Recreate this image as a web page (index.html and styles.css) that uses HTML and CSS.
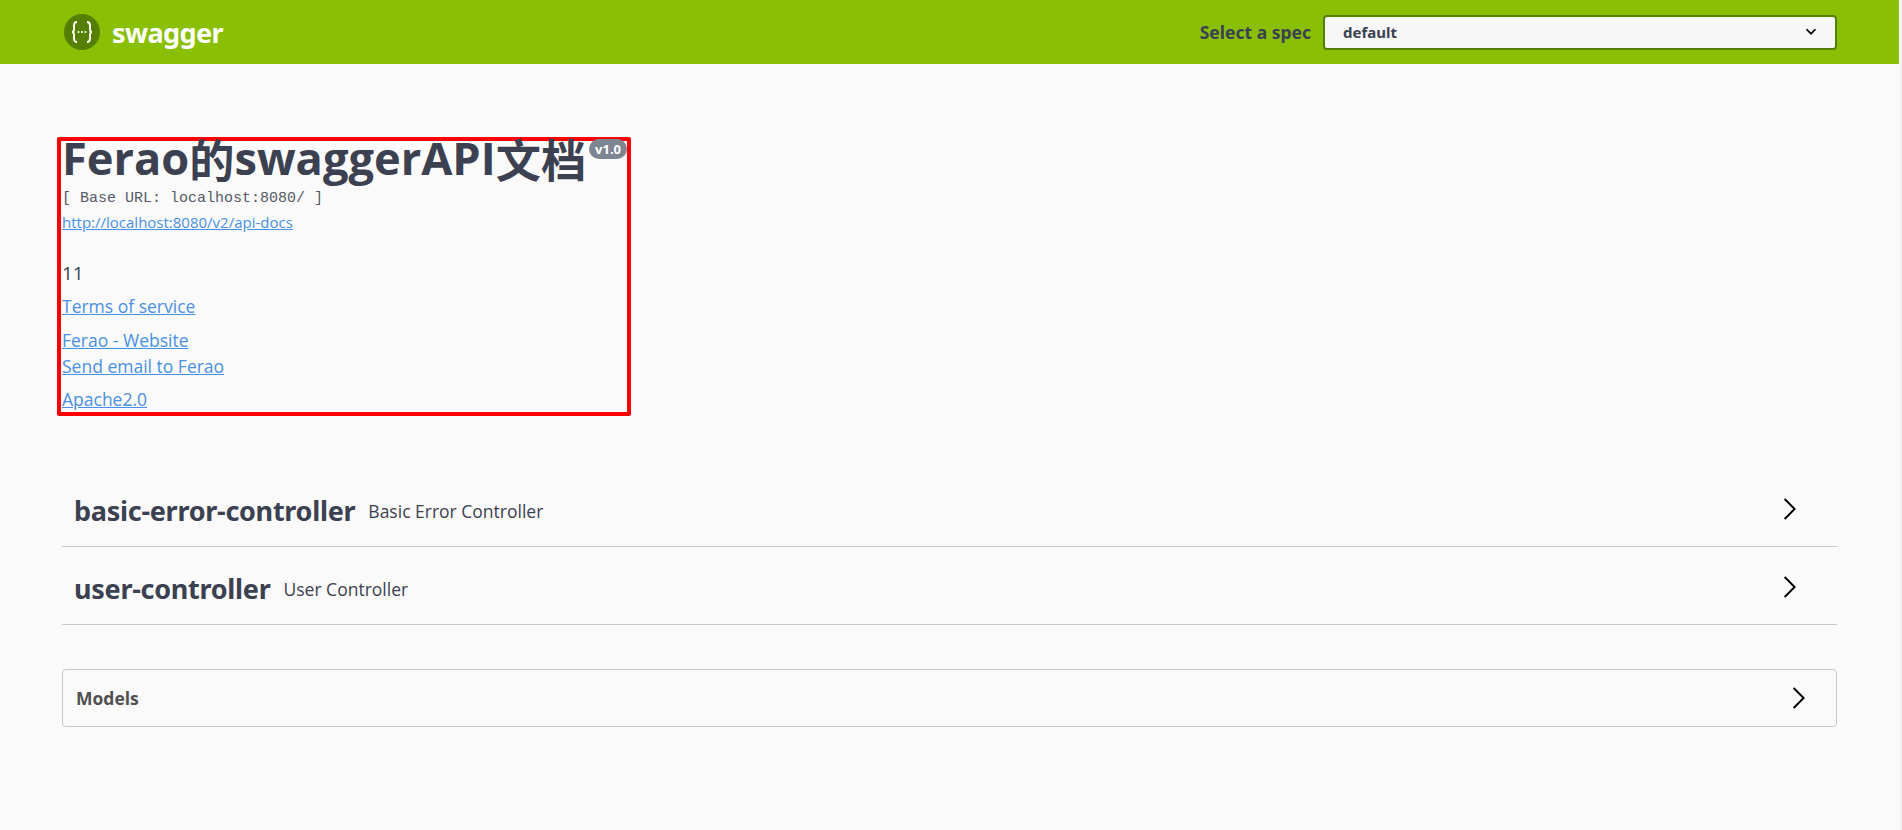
FILE: index.html
```html
<!DOCTYPE html>
<html lang="en">
<head>
    <meta name="viewport" content="width=device-width, initial-scale=1.0">
    <title>Swagger UI</title>
    <link rel="stylesheet" href="styles.css">
</head>
<body>
    <div class="topbar">
        <a class="brand" href="#">
            <svg class="brand-logo" viewBox="0 0 36 36" width="36" height="36">
                <circle cx="18" cy="18" r="18" fill="#547f00"/>
                <path d="M13 8c-2.6 0-3 1.5-3 3.5v3.6c0 1.7-.6 2.9-2 2.9 1.4 0 2 1.2 2 2.9v3.6c0 2 .4 3.5 3 3.5M23 8c2.6 0 3 1.5 3 3.5v3.6c0 1.7.6 2.9 2 2.9-1.4 0-2 1.2-2 2.9v3.6c0 2-.4 3.5-3 3.5" fill="none" stroke="#fff" stroke-width="1.9"/>
                <circle cx="14.5" cy="18" r="1.1" fill="#fff"/>
                <circle cx="18" cy="18" r="1.1" fill="#fff"/>
                <circle cx="21.5" cy="18" r="1.1" fill="#fff"/>
            </svg>
            <span>swagger</span>
        </a>
        <label class="spec">
            <span>Select a spec</span>
            <div class="select">
                <span>default</span>
                <svg viewBox="0 0 20 20" width="24" height="24"><path d="M13.25 7.2 10 10.5 6.75 7.2 5.75 8.2 10 12.5l4.25-4.3z"/></svg>
            </div>
        </label>
    </div>

    <div class="wrapper">
        <div class="info">
            <div class="mark"></div>
            <h2 class="title">Ferao<span class="cjk">的</span>swaggerAPI<span class="cjk">文档</span><span class="version">v1.0</span></h2>
            <div class="base-url">[ Base URL: localhost:8080/ ]</div>
            <a class="docs-link" href="#">http://localhost:8080/v2/api-docs</a>
            <p class="desc">11</p>
            <div class="terms"><a href="#">Terms of service</a></div>
            <div class="contact">
                <a href="#">Ferao - Website</a>
                <a href="#">Send email to Ferao</a>
            </div>
            <div class="license"><a href="#">Apache2.0</a></div>
        </div>

        <div class="tag">
            <h4>basic-error-controller</h4>
            <small>Basic Error Controller</small>
            <svg class="arrow" viewBox="0 0 20 20" width="26" height="26"><path d="M13.25 10 6.11 2.86l1.06-1.06L15.37 10l-8.2 8.2-1.06-1.06z"/></svg>
        </div>
        <div class="tag">
            <h4>user-controller</h4>
            <small>User Controller</small>
            <svg class="arrow" viewBox="0 0 20 20" width="26" height="26"><path d="M13.25 10 6.11 2.86l1.06-1.06L15.37 10l-8.2 8.2-1.06-1.06z"/></svg>
        </div>

        <div class="models">
            <h4>Models</h4>
            <svg class="arrow" viewBox="0 0 20 20" width="26" height="26"><path d="M13.25 10 6.11 2.86l1.06-1.06L15.37 10l-8.2 8.2-1.06-1.06z"/></svg>
        </div>
    </div>
</body>
</html>
```
FILE: styles.css
```css
*{
    box-sizing: border-box;
}
html{
    background-color: #fafafa;
}
body{
    margin: 0;
    min-height: 100vh;
    padding-right: 1px;
    border-right: 2px solid #f1f1f1;
    color: #3b4151;
    font-family: "Open Sans","Noto Sans CJK SC",sans-serif;
}
a{
    color: #4990e2;
}
h2,h4,p{
    margin: 0;
}
.topbar{
    height: 64px;
    padding: 0 62px 0 64px;
    background-color: #89bf04;
    display: flex;
    align-items: center;
    justify-content: space-between;
}
.brand{
    display: flex;
    align-items: center;
    gap: 12px;
    color: #ffffff;
    font-family: "Noto Sans",sans-serif;
    font-size: 27px;
    letter-spacing: -0.6px;
    font-weight: 700;
    text-decoration: none;
}
.spec{
    display: flex;
    align-items: center;
    gap: 12px;
    font-family: "Noto Sans",sans-serif;
    font-size: 17.5px;
    font-weight: 700;
}
.select{
    width: 514px;
    height: 35px;
    padding: 0 12px 0 18px;
    border: 2px solid #547f00;
    border-radius: 4px;
    background-color: #f7f7f7;
    display: flex;
    align-items: center;
    justify-content: space-between;
    font-size: 15px;
}
.wrapper{
    padding: 73px 62px 0;
}
.info{
    position: relative;
    height: 332px;
}
.mark{
    position: absolute;
    left: -5px;
    top: 0;
    width: 574px;
    height: 279px;
    border: 4px solid #ff0000;
    border-radius: 2px;
}
.title{
    height: 41px;
    font-size: 45.2px;
    line-height: 41px;
    font-weight: 700;
    white-space: nowrap;
}
.cjk{
    position: relative;
    top: 3px;
}
.version{
    display: inline-block;
    position: relative;
    top: -21px;
    margin-left: 3px;
    padding: 3px 6px;
    border-radius: 57px;
    background-color: #7d8492;
    color: #ffffff;
    font-size: 13px;
    line-height: 14px;
    font-weight: 700;
}
.base-url{
    margin-top: 11px;
    color: #555a68;
    font-family: "Liberation Mono",monospace;
    font-size: 15px;
    line-height: 20px;
}
.docs-link{
    display: block;
    margin-top: 3px;
    font-size: 15px;
    line-height: 20px;
}
.desc{
    margin-top: 29px;
    font-size: 19px;
    line-height: 24px;
}
.terms,.license{
    font-size: 17.5px;
    line-height: 24px;
}
.terms{
    margin-top: 9px;
}
.contact{
    margin-top: 9px;
}
.contact a{
    display: block;
    font-size: 17.5px;
    line-height: 26px;
}
.license{
    margin-top: 8px;
}
.tag{
    height: 78px;
    padding: 6px 12px 0;
    border-bottom: 1px solid #c5c7d0;
    display: flex;
    align-items: center;
}
.tag h4{
    font-family: "Noto Sans",sans-serif;
    font-size: 27px;
    letter-spacing: -0.28px;
    font-weight: 700;
}
.tag small{
    margin-left: 13px;
    font-size: 17.5px;
}
.tag .arrow{
    margin: -4px 23px 0 auto;
}
.models{
    margin-top: 44px;
    height: 58px;
    padding: 0 13px;
    border: 1px solid #c5c7d0;
    border-radius: 4px;
    display: flex;
    align-items: center;
    justify-content: space-between;
}
.models h4{
    color: #505050;
    font-size: 17.5px;
    font-weight: 700;
}
.models .arrow{
    margin-right: 12px;
}
```
